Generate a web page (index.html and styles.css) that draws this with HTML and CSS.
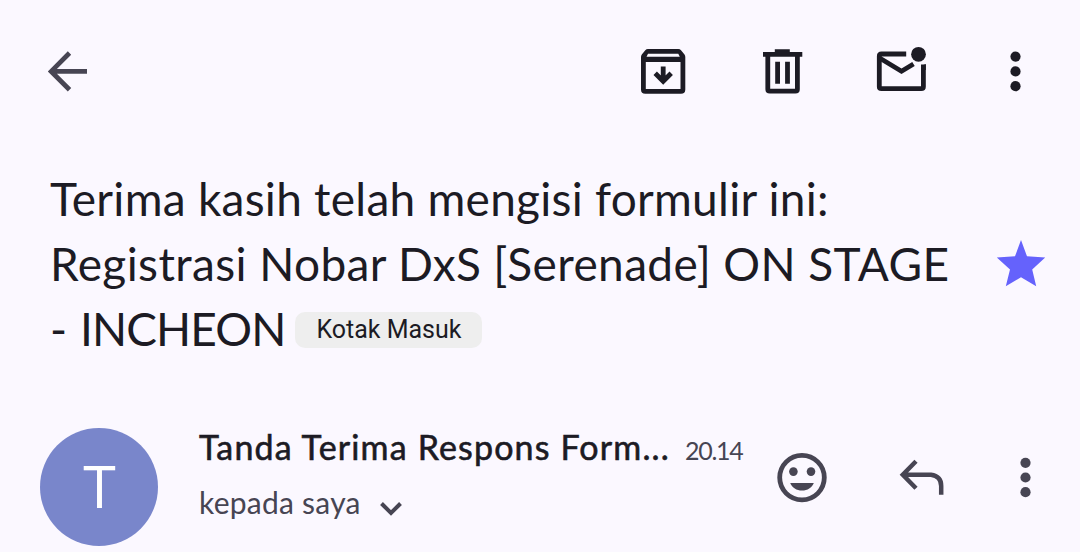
FILE: index.html
```html
<!DOCTYPE html>
<html lang="id">
<head>
<meta charset="UTF-8">
<meta name="viewport" content="width=device-width, initial-scale=1.0">
<title>Kotak Masuk</title>
<link rel="stylesheet" href="styles.css">
</head>
<body>

<header class="toolbar">
    <svg class="icon back" viewBox="0 0 60 60">
        <path class="line" d="M34.5 11 16.2 29.4 34.5 47.8M16 29.4H52"/>
    </svg>
    <div class="actions">
        <!-- archive -->
        <svg class="icon" viewBox="0 0 60 60">
            <path fill-rule="evenodd" d="M15 7Q13.3 7 12.3 8.3L8.8 12.5Q8 13.5 8 15V47.5Q8 51.8 12.3 51.8H48Q52.3 51.8 52.3 47.5V15Q52.3 13.5 51.5 12.5L48 8.3Q47 7 45.3 7ZM15 11.8 13.5 14.8H46.8L45.3 11.8ZM12.8 20V47H47.5V20Z"/>
            <path class="line" d="M30.2 24.5V39M22.2 31.3 30.2 39.3 38.2 31.3"/>
        </svg>
        <!-- trash -->
        <svg class="icon" viewBox="0 0 60 60">
            <path d="M22.8 7.2H37.8V10H50.3V14.8H11V10H22.8Z"/>
            <path class="line" d="M15.8 13V47.2Q15.8 49.2 17.8 49.2H43.4Q45.4 49.2 45.4 47.2V13M25.6 19.8V41.8M35.5 19.8V41.8"/>
        </svg>
        <!-- unread -->
        <svg class="icon" viewBox="0 0 60 60">
            <path class="line" d="M34.2 12H9.5Q7.3 12 7.3 14.2V44.7Q7.3 46.7 9.5 46.7H49.2Q51.4 46.7 51.4 44.7V22.5"/>
            <path class="line" d="M8 16.3 29.5 29.3 41.5 22"/>
            <path d="M49 24 53.8 22V28H49Z"/>
            <circle cx="46.5" cy="12.3" r="7.4"/>
        </svg>
        <svg class="icon more" viewBox="0 0 30 60">
            <circle cx="15.5" cy="14.6" r="5.1"/><circle cx="15.5" cy="29.4" r="5.1"/><circle cx="15.5" cy="44.2" r="5.1"/>
        </svg>
    </div>
</header>

<section class="subject">
    <h1>
        <span class="row1">Terima kasih telah mengisi formulir ini:</span><br>
        <span class="row2">Registrasi Nobar DxS [Serenade] ON STAGE</span><br>
        <span class="row3">- INCHEON</span><span class="label">Kotak Masuk</span>
    </h1>
    <svg class="star" viewBox="0 0 50 50">
        <path d="M25 1 31 17.3 49.2 18.4 36.2 30.5 40.2 47.3 25 38.2 9.8 47.3 14 30.5 .8 18.4 19 17.3Z"/>
    </svg>
</section>

<section class="message">
    <div class="avatar">T</div>
    <div class="sender">
        <div class="from"><span class="name">Tanda Terima Respons Form...</span><span class="time">20.14</span></div>
        <div class="to"><span>kepada saya</span>
            <svg class="chevron" viewBox="0 0 24 16"><path class="line" d="M2.5 3.5 12 13 21.5 3.5"/></svg>
        </div>
    </div>
    <div class="reply-actions">
        <svg class="icon" viewBox="0 0 60 60">
            <circle class="line" cx="30" cy="29.6" r="22.3"/>
            <circle cx="21.4" cy="23.6" r="4.3"/><circle cx="39" cy="23.6" r="4.3"/>
            <path d="M18.2 35H41.8C39.8 39.8 35.5 42.6 30 42.6S20.2 39.8 18.2 35Z"/>
        </svg>
        <svg class="icon" viewBox="0 0 60 60">
            <path class="line small" d="M24 13.2 10.8 26.7 24 40.2M10.5 26.7H39Q49.2 28 49.2 38V46.7"/>
        </svg>
        <svg class="icon more" viewBox="0 0 30 60">
            <circle cx="15.5" cy="14.8" r="5.1"/><circle cx="15.5" cy="29.5" r="5.1"/><circle cx="15.5" cy="44.2" r="5.1"/>
        </svg>
    </div>
</section>

</body>
</html>
```
FILE: styles.css
```css
body {
    margin: 0;
    height: 552px;
    overflow: hidden;
    background-color: #fbf8ff;
    color: #1c1b24;
    font-family: Lato, 'Open Sans', sans-serif;
}
svg {
    display: block;
    flex: none;
    fill: currentColor;
}
.icon {
    width: 60px;
    height: 60px;
}
.icon.more {
    width: 30px;
}
.line {
    fill: none;
    stroke: currentColor;
    stroke-width: 4.8;
}
.line.small {
    stroke-width: 4.5;
}
.toolbar {
    display: flex;
    justify-content: space-between;
    padding: 42px 50px 0 35px;
    height: 60px;
}
.back {
    color: #474553;
}
.actions {
    display: flex;
}
.actions .icon {
    margin-right: 59px;
}
.actions .icon:nth-child(2) {
    margin-right: 60px;
}
.actions .icon:nth-child(3) {
    margin-right: 68px;
}
.actions .icon.more {
    margin-right: 0;
}
.subject {
    display: flex;
    justify-content: space-between;
    align-items: center;
    height: 195px;
    padding: 64px 34px 0 50px;
}
h1 {
    margin: 0;
    font-size: 46px;
    font-weight: 400;
    line-height: 65px;
    white-space: nowrap;
}
.row1 {
    letter-spacing: 0.26px;
}
.row2 {
    letter-spacing: 0.38px;
}
.row3 {
    letter-spacing: -0.9px;
    word-spacing: 3px;
}
.label {
    display: inline-block;
    height: 36px;
    margin-left: 10px;
    padding: 0 21px;
    border-radius: 10px;
    background-color: #eeeeee;
    font-family: Roboto, sans-serif;
    font-size: 25px;
    line-height: 36px;
    vertical-align: 8px;
}
.star {
    width: 50px;
    height: 50px;
    color: #6562fc;
}
.message {
    display: flex;
    padding: 67px 39px 0 40px;
}
.avatar {
    flex: none;
    width: 118px;
    height: 118px;
    border-radius: 50%;
    background-color: #7986cb;
    color: #fff;
    font-family: 'Open Sans', sans-serif;
    font-size: 59px;
    line-height: 115px;
    text-align: center;
    text-indent: 1px;
}
.sender {
    flex: none;
    width: 573px;
    margin: -1px 0 0 41px;
    white-space: nowrap;
}
.from {
    display: flex;
    align-items: baseline;
    height: 40px;
    line-height: 40px;
}
.name {
    width: 486px;
    font-size: 34px;
    letter-spacing: 1.15px;
    -webkit-text-stroke: 0.6px currentColor;
}
.time {
    color: #474553;
    font-size: 25px;
    letter-spacing: -1.3px;
}
.to {
    display: flex;
    align-items: center;
    height: 40px;
    margin-top: 15px;
    color: #474553;
    font-size: 30px;
    letter-spacing: 0.25px;
}
.chevron {
    width: 24px;
    height: 16px;
    margin: 11px 0 0 18px;
}
.chevron .line {
    stroke-width: 4;
}
.reply-actions {
    display: flex;
    margin-top: 20px;
    color: #474553;
}
.reply-actions .icon {
    margin-right: 60px;
}
.reply-actions .icon:nth-child(2) {
    margin-right: 58px;
}
.reply-actions .icon.more {
    margin-right: 0;
}
```
